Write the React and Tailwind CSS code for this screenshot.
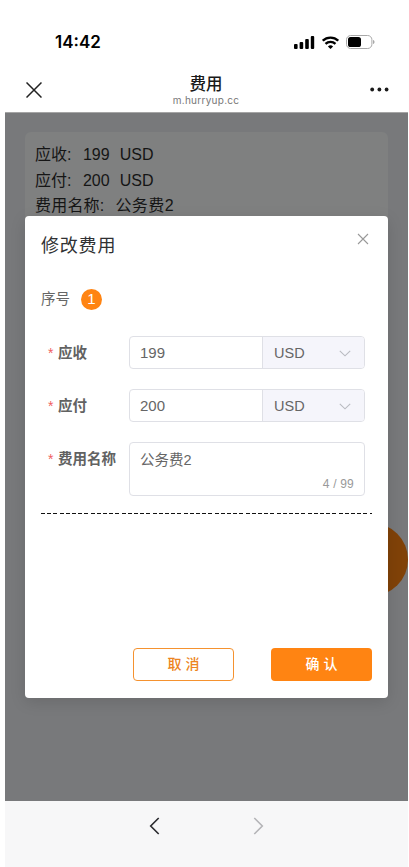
import React from 'react';

function StatusBar() {
  return (
    <div className="h-[68px] pt-[33px] pl-[55px] pr-[34px] flex items-start justify-between text-black">
      <span className="font-['Inter'] text-[17px] leading-[18px] font-semibold">14:42</span>
      <div className="flex items-center pt-[2px]">
        <svg width="21" height="13" viewBox="0 0 21 13" fill="currentColor">
          <rect x="0" y="8" width="3.6" height="5" rx="1" />
          <rect x="5.6" y="6" width="3.6" height="7" rx="1" />
          <rect x="11.2" y="3" width="3.6" height="10" rx="1" />
          <rect x="16.8" y="0" width="3.4" height="13" rx="1" />
        </svg>
        <svg className="ml-[7px]" width="17" height="13" viewBox="0 0 17 13" fill="none" stroke="currentColor" strokeWidth="2.3">
          <path d="M.8 4.7a11 11 0 0 1 15.4 0" />
          <path d="M3.5 7.8a7.2 7.2 0 0 1 10 0" />
          <path d="M8.5 13 5.9 10.4a3.8 3.8 0 0 1 5.2 0Z" fill="currentColor" stroke="none" />
        </svg>
        <svg className="ml-[7px]" width="29" height="14" viewBox="0 0 29 14">
          <rect x=".5" y=".5" width="25.4" height="13" rx="4.2" fill="none" stroke="#a8a8a8" />
          <rect x="2" y="2" width="13" height="10" rx="2.6" fill="#000" />
          <path d="M27 5v4c1-.4 1.500-1.100 1.500-2S28 5.400 27 5Z" fill="#a8a8a8" />
        </svg>
      </div>
    </div>
  );
}

function NavBar() {
  return (
    <div className="h-[44px] pl-[26px] pr-[20px] flex items-start justify-between">
      <svg className="mt-[14px]" width="16" height="16" viewBox="0 0 16 16" fill="none" stroke="#222" strokeWidth="1.5">
        <path d="m.5.5 15 15M15.5.5l-15 15" />
      </svg>
      <div className="flex flex-col items-center pt-[6px]">
        <span className="text-[16.5px] leading-[20px] font-medium text-[#1a1a1a]">费用</span>
        <span className="font-['Inter'] text-[10px] leading-[12px] tracking-[0.27px] text-[#777]">m.hurryup.cc</span>
      </div>
      <svg className="mt-[19px]" width="19" height="5" viewBox="0 0 19 5" fill="#1a1a1a">
        <circle cx="2.2" cy="2.5" r="1.9" />
        <circle cx="9.4" cy="2.5" r="1.9" />
        <circle cx="16.6" cy="2.5" r="1.9" />
      </svg>
    </div>
  );
}

function Label({ children }) {
  return (
    <div className="w-[87.5px] shrink-0 pl-[7px] h-[33px] pt-[2px] flex items-center text-[14.5px] font-bold text-[#626262]">
      <span className="w-[10px] font-normal text-[#f06060] text-[14px]">*</span>
      {children}
    </div>
  );
}

function AmountRow({ label, value }) {
  return (
    <div className="flex">
      <Label>{label}</Label>
      <div className="w-[236.5px] h-[33px] flex rounded-[4px] border border-[#dfe0e6] overflow-hidden text-[#666]">
        <div className="w-[132.5px] pl-[10.5px] pt-[1px] flex items-center text-[15px]">{value}</div>
        <div className="flex-1 pl-[11px] pr-[13px] pt-[2px] flex items-center justify-between border-l border-[#dfe0e6] bg-[#f5f5fb] text-[14.5px]">
          USD
          <svg className="-mt-[1px]" width="12" height="7" viewBox="0 0 12 7" fill="none" stroke="#b8bac0" strokeWidth="1.1">
            <path d="m.8.8 5.2 5 5.2-5" />
          </svg>
        </div>
      </div>
    </div>
  );
}

function EditDialog() {
  return (
    <div className="absolute left-[20px] top-[103px] w-[363px] h-[482px] flex flex-col rounded-[4px] bg-white px-[16px] shadow-[0_4px_16px_rgba(0,0,0,0.12)]">
      <div className="pt-[17px] flex items-start justify-between">
        <h2 className="text-[18px] leading-[26px] tracking-[0.8px] text-[#303133]">修改费用</h2>
        <svg className="mr-[3px]" width="12" height="12" viewBox="0 0 12 12" fill="none" stroke="#999" strokeWidth="1.1">
          <path d="m1 1 10 10M11 1 1 11" />
        </svg>
      </div>
      <div className="mt-[30px] h-[21px] flex items-center gap-[11px] text-[14.5px] text-[#666]">
        序号
        <span className="w-[21px] h-[21px] flex items-center justify-center rounded-full bg-[#ff8412] text-[15px] text-white">1</span>
      </div>
      <div className="mt-[26px] flex flex-col gap-[20px]">
        <AmountRow label="应收" value="199" />
        <AmountRow label="应付" value="200" />
        <div className="flex">
          <Label>费用名称</Label>
          <div className="w-[236.5px] h-[54px] flex flex-col justify-between rounded-[4px] border border-[#dfe0e6] pl-[10.5px] pr-[10px] pt-[6px] pb-[3px]">
            <span className="text-[14.5px] leading-[22px] text-[#666]">公务费2</span>
            <span className="self-end text-[12px] leading-[16px] tracking-[0.2px] text-[#999]">4 / 99</span>
          </div>
        </div>
      </div>
      <div className="mt-[17px] h-px w-[331px] bg-[repeating-linear-gradient(90deg,#111_0_4px,transparent_4px_6.2px)]" />
      <div className="mt-auto mb-[17px] flex justify-end gap-[37px] text-[14px] tracking-[4px]">
        <button className="w-[101px] h-[33px] pl-[4px] rounded-[4px] border border-[#f5922f] text-[#ec8420] font-medium">取消</button>
        <button className="w-[101px] h-[33px] pl-[4px] rounded-[4px] bg-[#ff8412] text-white font-medium">确认</button>
      </div>
    </div>
  );
}

export default function App() {
  return (
    <div className="w-[409px] h-[867px] flex flex-col overflow-hidden bg-white font-['Liberation_Sans','Noto_Sans_CJK_SC',sans-serif]">
      <StatusBar />
      <NavBar />
      <main className="relative ml-[5px] mr-px h-[689px] overflow-hidden border-t border-[#a5a5a5] bg-[#78797b] px-[20px] pt-[19px]">
        <div className="h-[160px] rounded-[6px] bg-[#7f8080] pl-[10px] pt-[10px] text-[16px] leading-[25.5px] text-[#151515]">
          <p><span>应收:</span><span className="ml-[11.5px]">199</span><span className="ml-[10px]">USD</span></p>
          <p><span>应付:</span><span className="ml-[11.5px]">200</span><span className="ml-[10px]">USD</span></p>
          <p><span className="tracking-[0.2px]">费用名称:</span><span className="ml-[11px] tracking-[0.4px]">公务费2</span></p>
        </div>
        <div className="absolute right-0 top-[410px] w-[73px] h-[73px] rounded-full bg-[#804208]" />
        <EditDialog />
      </main>
      <footer className="ml-[5px] mr-px flex-1 flex justify-between items-start bg-[#f7f7f8] pt-[16px] px-[144px]">
        <svg width="11" height="18" viewBox="0 0 11 18" fill="none" stroke="#2a2a2e" strokeWidth="1.6">
          <path d="M9.7 1 1.7 9l8 8" />
        </svg>
        <svg width="11" height="18" viewBox="0 0 11 18" fill="none" stroke="#b4b4b7" strokeWidth="1.6">
          <path d="m1.3 1 8 8-8 8" />
        </svg>
      </footer>
    </div>
  );
}
